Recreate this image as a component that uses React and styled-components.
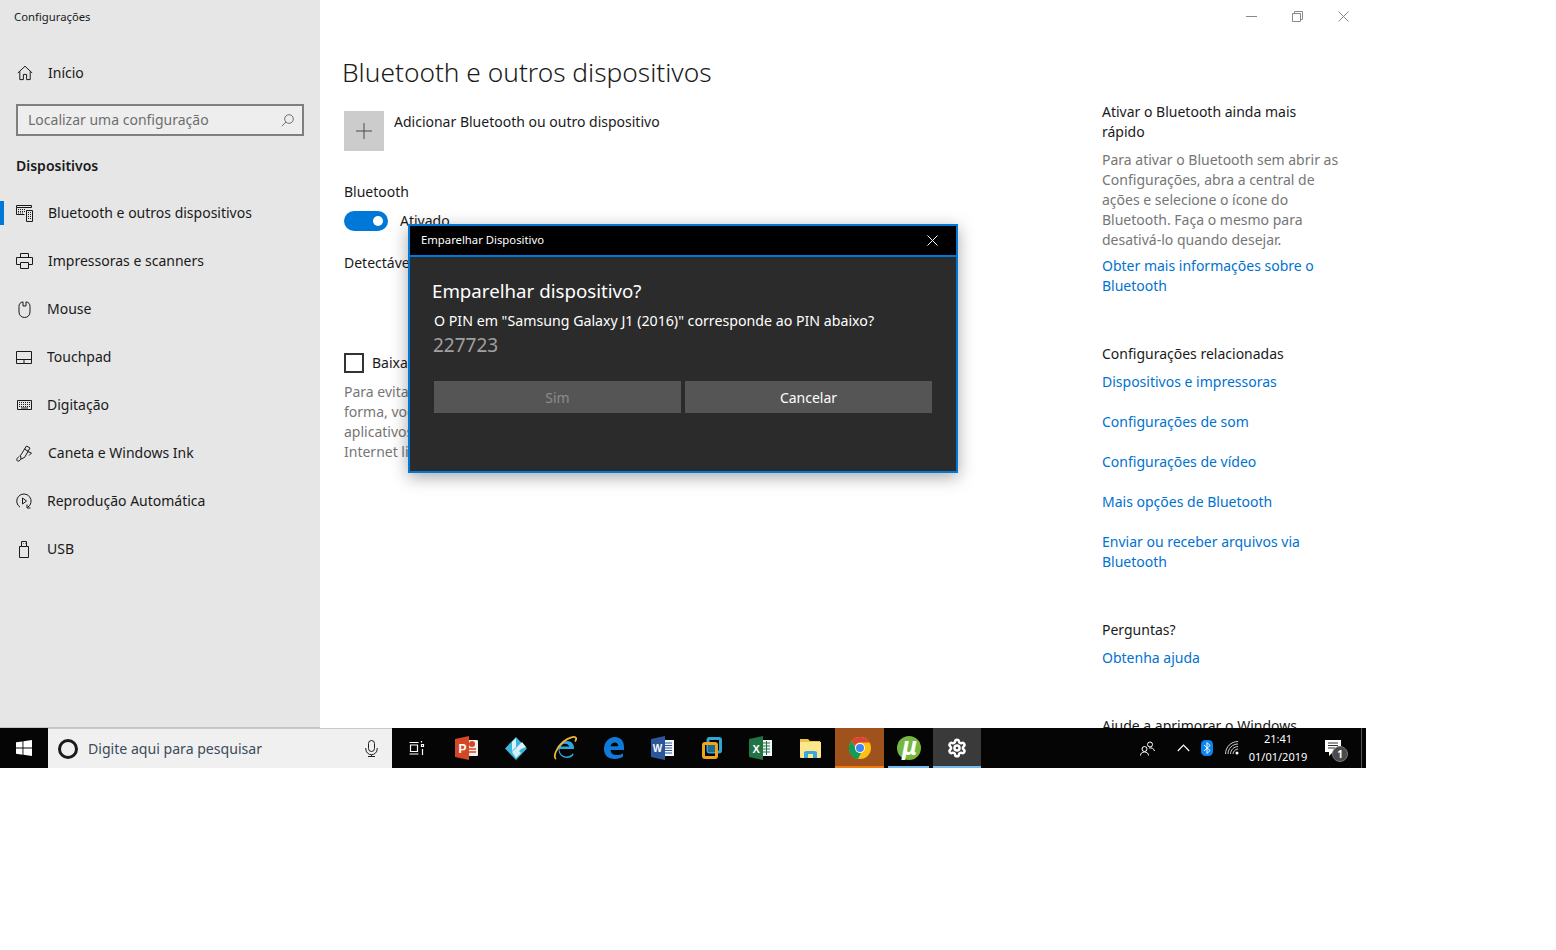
import React from "react";
import styled, { createGlobalStyle } from "styled-components";
import { Settings } from "lucide-react";

const GlobalStyle = createGlobalStyle`
  html, body {
    margin: 0;
    background: #fff;
  }
  body {
    font-family: "Noto Sans", "Open Sans", sans-serif;
    font-size: 14px;
    line-height: 20px;
    color: #1a1a1a;
  }
  * { box-sizing: border-box; }
`;

const Line = (props) => (
  <svg fill="none" stroke="currentColor" strokeWidth="1" {...props} />
);

const HomeIcon = () => (
  <Line width="16" height="16" viewBox="0 0 16 16">
    <path d="M.8 8 8 1.2 15.2 8M2.8 6.4v8.2h3.6V9.4h3.2v5.2h3.6V6.4" />
  </Line>
);
const DeviceIcon = () => (
  <Line width="17" height="17" viewBox="0 0 17 17">
    <path d="M.5.5h15v2H.5zM.5 2.500v7h8M10.500 5.500h6v11h-6z" />
    <path d="M2 4.500h8M2 6.500h7M2 8h6M12 7.500h3M12 9.500h3M12 11.500h3M12 13.500h3" strokeDasharray="1 1" />
  </Line>
);
const PrinterIcon = () => (
  <Line width="17" height="16" viewBox="0 0 17 16">
    <path d="M4.500 4.500V.5h8v4M4.500 11.500H.5v-7h16v7h-4M4.500 9.500h8v6h-8z" />
  </Line>
);
const MouseIcon = () => (
  <Line width="13" height="17" viewBox="0 0 13 17">
    <path d="M5 .9C2.200 1.200 1 3 1 5.500v5.500c0 3.200 2.300 5.500 5.500 5.500S12 14.200 12 11V5.500C12 3 10.800 1.200 8 .9V5H5z" />
  </Line>
);
const TouchpadIcon = () => (
  <Line width="16" height="13" viewBox="0 0 16 13">
    <path d="M.5.5h15v12H.5zM.5 8.500h15M8 8.500v4" />
  </Line>
);
const KeyboardIcon = () => (
  <Line width="15" height="10" viewBox="0 0 15 10">
    <path d="M.5.5h14v9H.5z" />
    <path d="M2 2.500h11M2 4.500h11M2 6.500h11" strokeDasharray="1 1" />
    <path d="M4 8h7" />
  </Line>
);
const PenIcon = () => (
  <Line width="17" height="17" viewBox="0 0 17 17">
    <path d="M4.500 10.500 10.500 1l3.500 2-5.500 9.500-3.500 1.500zM11.500 6.500l4 1.500-2.500 2.500M8.500 4l3.500 2.200" />
    <path d="M5 14c-1.500 2.500-4 2.700-4.200.8-.1-1.500 1.500-2.600 2.700-3.800" />
  </Line>
);
const AutoplayIcon = () => (
  <Line width="16" height="16" viewBox="0 0 16 16">
    <path d="M4 14.200A7.200 7.200 0 1 1 11.500 14.400" />
    <path d="M11 11.500v3.500h3.500M6.500 5l4 3-4 3z" />
  </Line>
);
const UsbIcon = () => (
  <Line width="10" height="17" viewBox="0 0 10 17">
    <path d="M2.500.5h5v5h-5zM.5 5.500h9v11h-9zM4 2.500h.5M6 2.500h.5" />
  </Line>
);

const MagnifierIcon = () => (
  <Line width="13" height="13" viewBox="0 0 13 13">
    <circle cx="8" cy="5" r="4.300" />
    <path d="M5 8 .8 12.200" />
  </Line>
);

const CloseIcon = ({ size = 11 }) => (
  <Line width={size} height={size} viewBox="0 0 11 11">
    <path d="M.5.5l10 10M10.500.5l-10 10" />
  </Line>
);

const WindowsLogo = () => (
  <svg width="16" height="16" viewBox="0 0 16 16" fill="#fff">
    <path d="M0 2.300 6.500 1.400v6.200H0zM7.400 1.300 16 0v7.600H7.400zM0 8.500h6.500v6.200L0 13.800zM7.400 8.500H16V16l-8.600-1.200z" />
  </svg>
);

const MicIcon = () => (
  <svg width="13" height="17" viewBox="0 0 13 17" fill="none" stroke="#1f1f1f">
    <rect x="3.500" y=".5" width="6" height="11" rx="3" />
    <path d="M.8 8v1a5.700 5.700 0 0 0 11.400 0V8M6.500 15v1.500M3 16.500h7" />
  </svg>
);

const TaskViewIcon = () => (
  <svg width="16" height="16" viewBox="0 0 16 16" fill="none" stroke="#fff" strokeWidth="1.200">
    <path d="M.5 2.500h9M.5 14h9M1.500 5h7v6.500h-7z" />
    <path d="M12.500 1v1.500M14.500 4.500h-2V6.500h2zM13.500 9v6" />
  </svg>
);

const PowerPointIcon = () => (
  <svg width="23" height="24" viewBox="0 0 23 24">
    <path d="M8 4h14a1 1 0 0 1 1 1v14a1 1 0 0 1-1 1H8z" fill="#f4efe9" />
    <path d="M13 8h7M13 13h8M13 16h8" stroke="#d24726" strokeWidth="1.500" />
    <circle cx="17" cy="8" r="3" fill="#d24726" />
    <path d="M0 3 14 0v24L0 21z" fill="#d24726" />
    <text x="3.500" y="16.500" fontFamily="Liberation Sans" fontWeight="700" fontSize="12" fill="#fff">P</text>
  </svg>
);

const KodiIcon = () => (
  <svg width="22" height="23" viewBox="0 0 22 23">
    <path d="M11 0 22 11.500 11 23 0 11.500z" fill="#3db6dc" />
    <path d="M7 5l4-4v9l-4 4zM11 11l6-6 4 5-5 2-3 3z" fill="#dff3fa" />
    <path d="M7 15l4-4 5 5-5 5z" fill="#d3eef7" />
  </svg>
);

const IeIcon = () => (
  <svg width="24" height="24" viewBox="0 0 24 24" fill="none">
    <path d="M20 17c-2 3.500-9 5-12 1-1-1.500-1.500-3-1.500-5H21c.5-5-2.500-8-7-8-5 0-8 3.500-8.500 8 0 6 4 9 8.500 9 3 0 5-1 6.500-3zM8 10.500c1-3 6-4 8.500 0z" fill="#2ea7e0" fillRule="evenodd" />
    <path d="M3 23C0 21 3 12 10 6c6-5 12-6 13-4 .5 1-.3 2.500-1 3.500" stroke="#f2b632" strokeWidth="1.800" />
  </svg>
);

const EdgeIcon = () => (
  <svg width="20" height="22" viewBox="0 0 20 22">
    <path d="M19 19.500c-2 1.500-4.500 2.500-8 2.500-6 0-11-3-11-10C0 5 5 0 11 0c5 0 9 3.500 9 10v3H6.500c.3 3 2.500 5 6 5 2.500 0 4.500-.500 6.500-1.500zM6.500 9.200h7.800c0-2.200-1.300-3.700-3.600-3.700-2 0-3.700 1.500-4.200 3.700z" fill="#0f7bd8" fillRule="evenodd" />
  </svg>
);

const WordIcon = () => (
  <svg width="23" height="24" viewBox="0 0 23 24">
    <path d="M8 4h15v16H8z" fill="#f2f5fb" />
    <path d="M14 7h7M14 9.500h7M14 12h7M14 14.500h7M14 17h7" stroke="#2b579a" />
    <path d="M0 3 14 0v24L0 21z" fill="#2b579a" />
    <text x="1.800" y="16" fontFamily="Liberation Sans" fontWeight="700" fontSize="10" fill="#fff">W</text>
  </svg>
);

const VmwareIcon = () => (
  <svg width="20" height="22" viewBox="0 0 20 22" fill="none">
    <rect x="6" y="1.500" width="12.500" height="13.500" rx="1.500" stroke="#2fa6d6" strokeWidth="3" />
    <rect x="1.500" y="6.500" width="13" height="14" rx="1.500" stroke="#f2a31b" strokeWidth="3" />
    <rect x="6" y="8" width="7" height="7" fill="#1c6c8e" />
  </svg>
);

const ExcelIcon = () => (
  <svg width="23" height="24" viewBox="0 0 23 24">
    <path d="M8 4h15v16H8z" fill="#f2f8f4" />
    <path d="M14 7h7M14 10h7M14 13h7M14 16h7M17.500 5v14" stroke="#217346" />
    <path d="M0 3 14 0v24L0 21z" fill="#217346" />
    <text x="3.500" y="16.500" fontFamily="Liberation Sans" fontWeight="700" fontSize="11" fill="#fff">X</text>
  </svg>
);

const FolderIcon = () => (
  <svg width="21" height="20" viewBox="0 0 21 20">
    <path d="M0 1h8l2 2h10v3H0z" fill="#e8c34a" />
    <path d="M0 4h21v15a1 1 0 0 1-1 1H1a1 1 0 0 1-1-1z" fill="#fde78c" />
    <path d="M4 20v-6l2-1h9l2 1v6h-4v-4H8v4z" fill="#39a7df" />
  </svg>
);

const ChromeIcon = () => (
  <svg width="22" height="22" viewBox="0 0 22 22">
    <circle cx="11" cy="11" r="11" fill="#fbc116" />
    <path d="M11 0a11 11 0 0 1 9.500 5.500H11a5.500 5.500 0 0 0-5.200 3.700L2.500 4A11 11 0 0 1 11 0z" fill="#db4437" />
    <path d="M2.500 4l5 8.500a4.500 4.500 0 0 0 4.500 3.500L9 22A11 11 0 0 1 2.500 4z" fill="#0f9d58" />
    <circle cx="11" cy="11" r="5" fill="#fff" />
    <circle cx="11" cy="11" r="4" fill="#4285f4" />
  </svg>
);

const TorrentIcon = () => (
  <svg width="24" height="24" viewBox="0 0 24 24">
    <circle cx="12" cy="12" r="12" fill="#76b83f" />
    <text x="12.500" y="19" textAnchor="middle" fontFamily="Liberation Sans" fontStyle="italic" fontWeight="700" fontSize="26" fill="#fff">µ</text>
  </svg>
);

const PeopleIcon = () => (
  <svg width="15" height="15" viewBox="0 0 15 15" fill="none" stroke="#fff">
    <circle cx="4.500" cy="8" r="2.500" />
    <circle cx="10" cy="3.500" r="2.500" />
    <path d="M.5 14.500c0-2 1.500-3.500 4-3.500s4 1.500 4 3.500M9 7c2.500-.5 5 .5 5.500 3" />
  </svg>
);

const ChevronIcon = () => (
  <svg width="13" height="8" viewBox="0 0 13 8" fill="none" stroke="#fff" strokeWidth="1.200">
    <path d="M.8 7 6.500 1.200 12.200 7" />
  </svg>
);

const BluetoothBadge = () => (
  <svg width="12" height="16" viewBox="0 0 12 16">
    <rect width="12" height="16" rx="4.500" fill="#0a84ee" />
    <path d="M3 5l6 5.500L6 13.500v-11L9 5.500 3 11" fill="none" stroke="#fff" />
  </svg>
);

const WifiIcon = () => (
  <svg width="14" height="14" viewBox="0 0 14 14" fill="none" stroke="#cfcfcf">
    <path d="M.5 13C.5 6 6 .5 13 .5M3 13c0-5.500 4.500-10 10-10M5.500 13c0-4 3.500-7.500 7.500-7.500M8 13c0-2.500 2.500-5 5-5" />
    <circle cx="12" cy="12" r="1.500" fill="#fff" stroke="none" />
  </svg>
);

const NotificationIcon = () => (
  <svg width="16" height="16" viewBox="0 0 16 16">
    <path d="M0 0h16v12H8l-4 4v-4H0z" fill="#fff" />
    <path d="M3 3h10M3 5.500h10M3 8h7" stroke="#333" />
  </svg>
);

const navItems = [
  { label: "Bluetooth e outros dispositivos", Icon: DeviceIcon, active: true },
  { label: "Impressoras e scanners", Icon: PrinterIcon },
  { label: "Mouse", Icon: MouseIcon },
  { label: "Touchpad", Icon: TouchpadIcon },
  { label: "Digitação", Icon: KeyboardIcon },
  { label: "Caneta e Windows Ink", Icon: PenIcon },
  { label: "Reprodução Automática", Icon: AutoplayIcon },
  { label: "USB", Icon: UsbIcon },
];

const relatedLinks = [
  "Dispositivos e impressoras",
  "Configurações de som",
  "Configurações de vídeo",
  "Mais opções de Bluetooth",
  "Enviar ou receber arquivos via Bluetooth",
];

const pinnedApps = [
  { name: "powerpoint", Icon: PowerPointIcon },
  { name: "kodi", Icon: KodiIcon },
  { name: "ie", Icon: IeIcon },
  { name: "edge", Icon: EdgeIcon },
  { name: "word", Icon: WordIcon },
  { name: "vmware", Icon: VmwareIcon },
  { name: "excel", Icon: ExcelIcon },
  { name: "explorer", Icon: FolderIcon, width: 50 },
];

const App = () => {
  return (
    <Screen>
      <GlobalStyle />
      <Window>
        <Sidebar>
          <AppTitle>Configurações</AppTitle>
          <HomeLink>
            <NavIcon><HomeIcon /></NavIcon>
            Início
          </HomeLink>
          <SearchBox>
            <span>Localizar uma configuração</span>
            <MagnifierIcon />
          </SearchBox>
          <SectionTitle>Dispositivos</SectionTitle>
          <NavList>
            {navItems.map(({ label, Icon, active }) => (
              <NavItem key={label} $active={active}>
                <NavIcon><Icon /></NavIcon>
                {label}
              </NavItem>
            ))}
          </NavList>
        </Sidebar>

        <Main>
          <WindowControls>
            <ControlButton>
              <svg width="11" height="1"><path d="M0 .5h11" stroke="currentColor" /></svg>
            </ControlButton>
            <ControlButton>
              <Line width="11" height="11" viewBox="0 0 11 11">
                <path d="M.5 2.500h8v8h-8zM2.500 2.500v-2h8v8h-2" />
              </Line>
            </ControlButton>
            <ControlButton><CloseIcon /></ControlButton>
          </WindowControls>

          <Body>
            <Content>
              <PageTitle>Bluetooth e outros dispositivos</PageTitle>
              <AddRow>
                <AddTile>
                  <svg width="16" height="16"><path d="M8 0v16M0 8h16" stroke="#4a4a4a" /></svg>
                </AddTile>
                <AddLabel>Adicionar Bluetooth ou outro dispositivo</AddLabel>
              </AddRow>
              <FieldLabel>Bluetooth</FieldLabel>
              <ToggleRow>
                <Toggle />
                <span>Ativado</span>
              </ToggleRow>
              <Discoverable>Detectável</Discoverable>
              <CheckRow>
                <CheckBox />
                <span>Baixar</span>
              </CheckRow>
              <Muted>
                Para evitar
                <br />
                forma, você
                <br />
                aplicativos
                <br />
                Internet limitada
              </Muted>
            </Content>

            <Aside>
              <AsideBlock>
                <AsideTitle>Ativar o Bluetooth ainda mais rápido</AsideTitle>
                <AsideText>
                  Para ativar o Bluetooth sem abrir as Configurações, abra a
                  central de ações e selecione o ícone do Bluetooth. Faça o
                  mesmo para desativá-lo quando desejar.
                </AsideText>
                <AsideLink $gap={6}>Obter mais informações sobre o Bluetooth</AsideLink>
              </AsideBlock>
              <AsideBlock>
                <AsideTitle>Configurações relacionadas</AsideTitle>
                {relatedLinks.map((link, i) => (
                  <AsideLink key={link} $gap={i === 0 ? 8 : 20}>{link}</AsideLink>
                ))}
              </AsideBlock>
              <AsideBlock>
                <AsideTitle>Perguntas?</AsideTitle>
                <AsideLink $gap={8}>Obtenha ajuda</AsideLink>
              </AsideBlock>
              <AsideBlock>
                <AsideTitle>Ajude a aprimorar o Windows</AsideTitle>
              </AsideBlock>
            </Aside>
          </Body>
        </Main>
      </Window>

      <Taskbar>
        <StartButton><WindowsLogo /></StartButton>
        <TaskSearch>
          <CortanaRing />
          <SearchHint>Digite aqui para pesquisar</SearchHint>
          <MicIcon />
        </TaskSearch>
        <TaskTile $width={50}><TaskViewIcon /></TaskTile>
        {pinnedApps.map(({ name, Icon, width }) => (
          <TaskTile key={name} $width={width}><Icon /></TaskTile>
        ))}
        <TaskTile $bg="#a0521c" $underline="#f07a0c"><ChromeIcon /></TaskTile>
        <TaskTile $underline="#76b9ed" $inset={4}><TorrentIcon /></TaskTile>
        <TaskTile $width={48} $bg="#3a3a3a" $underline="#76b9ed">
          <Settings size={20} color="#fff" strokeWidth={3} />
        </TaskTile>

        <Tray>
          <TrayItem $width={36}><PeopleIcon /></TrayItem>
          <TrayItem $width={36}><ChevronIcon /></TrayItem>
          <TrayItem $width={12}><BluetoothBadge /></TrayItem>
          <TrayItem $width={38}><WifiIcon /></TrayItem>
          <Clock>
            <span>21:41</span>
            <span>01/01/2019</span>
          </Clock>
          <TrayItem $width={56}>
            <NotificationWrap>
              <NotificationIcon />
              <NotificationCount>1</NotificationCount>
            </NotificationWrap>
          </TrayItem>
          <TrayEdge />
        </Tray>
      </Taskbar>

      <Dialog>
        <DialogBar>
          <span>Emparelhar Dispositivo</span>
          <DialogClose><CloseIcon /></DialogClose>
        </DialogBar>
        <DialogBody>
          <DialogHeading>Emparelhar dispositivo?</DialogHeading>
          <DialogText>O PIN em "Samsung Galaxy J1 (2016)" corresponde ao PIN abaixo?</DialogText>
          <DialogPin>227723</DialogPin>
          <DialogActions>
            <DialogButton $disabled>Sim</DialogButton>
            <DialogButton>Cancelar</DialogButton>
          </DialogActions>
        </DialogBody>
      </Dialog>
    </Screen>
  );
};

const Screen = styled.div`
  position: relative;
  width: 1366px;
  height: 768px;
`;

const Window = styled.div`
  display: flex;
  height: 728px;
  overflow: hidden;
`;

const Sidebar = styled.aside`
  flex: 0 0 320px;
  background: #e6e6e6;
  border-bottom: 1px solid #c4c4c4;
`;

const AppTitle = styled.div`
  height: 32px;
  padding: 7px 0 0 14px;
  font-size: 11.3px;
  line-height: 20px;
`;

const NavIcon = styled.span`
  flex: 0 0 16px;
  display: flex;
  align-items: center;
  justify-content: center;
  margin-right: 15px;
`;

const HomeLink = styled.div`
  display: flex;
  align-items: center;
  height: 20px;
  margin-top: 31px;
  padding-left: 17px;
`;

const SearchBox = styled.div`
  display: flex;
  align-items: center;
  justify-content: space-between;
  width: 288px;
  height: 32px;
  margin: 21px 0 0 16px;
  padding: 0 8px 0 10px;
  background: #eeeeee;
  border: 2px solid #7f7f7f;
  color: #6e6e6e;
`;

const SectionTitle = styled.h2`
  margin: 20px 0 0 16px;
  font-size: 14px;
  line-height: 20px;
  font-weight: 600;
`;

const NavList = styled.nav`
  margin-top: 13px;
`;

const NavItem = styled.div`
  display: flex;
  align-items: center;
  height: 48px;
  padding-left: 16px;
  position: relative;

  &::before {
    content: "";
    display: ${(p) => (p.$active ? "block" : "none")};
    position: absolute;
    left: 0;
    top: 12px;
    width: 4px;
    height: 24px;
    background: #0078d7;
  }
`;

const Main = styled.main`
  flex: 1;
  display: flex;
  flex-direction: column;
  min-width: 0;
  background: #fff;
`;

const WindowControls = styled.div`
  display: flex;
  justify-content: flex-end;
  flex: 0 0 32px;
`;

const ControlButton = styled.div`
  width: 46px;
  display: flex;
  align-items: center;
  justify-content: center;
  color: #8a8a8a;
`;

const Body = styled.div`
  display: flex;
  flex: 0 0 auto;
  padding-left: 22px;
`;

const Content = styled.div`
  flex: 0 0 760px;
`;

const PageTitle = styled.h1`
  margin: 20px 0 0;
  font-size: 26.3px;
  line-height: 40px;
  font-weight: 300;
`;

const AddRow = styled.div`
  display: flex;
  margin: 19px 0 0 2px;
`;

const AddTile = styled.div`
  width: 40px;
  height: 40px;
  display: flex;
  align-items: center;
  justify-content: center;
  background: #cccccc;
`;

const AddLabel = styled.div`
  margin: 1px 0 0 10px;
`;

const FieldLabel = styled.div`
  margin: 31px 0 0 2px;
`;

const ToggleRow = styled.div`
  display: flex;
  align-items: center;
  gap: 12px;
  margin: 9px 0 0 2px;
`;

const Toggle = styled.div`
  position: relative;
  width: 44px;
  height: 20px;
  border-radius: 10px;
  background: #0078d7;

  &::after {
    content: "";
    position: absolute;
    right: 5px;
    top: 5px;
    width: 10px;
    height: 10px;
    border-radius: 50%;
    background: #fff;
  }
`;

const Discoverable = styled.div`
  margin: 22px 0 0 2px;
`;

const CheckRow = styled.div`
  display: flex;
  align-items: center;
  gap: 8px;
  margin: 80px 0 0 2px;
`;

const CheckBox = styled.div`
  width: 20px;
  height: 20px;
  border: 2px solid #333;
`;

const Muted = styled.p`
  margin: 9px 0 0 2px;
  color: #767676;
  white-space: nowrap;
`;

const Aside = styled.div`
  flex: 0 0 240px;
  padding-top: 70px;
`;

const AsideBlock = styled.section`
  & + & {
    margin-top: 48px;
  }
`;

const AsideTitle = styled.div``;

const AsideText = styled.p`
  margin: 8px 0 0;
  color: #767676;
`;

const AsideLink = styled.a`
  display: block;
  margin-top: ${(p) => p.$gap}px;
  color: #0072cf;
`;

const Taskbar = styled.div`
  display: flex;
  height: 40px;
  background: #050505;
`;

const StartButton = styled.div`
  flex: 0 0 48px;
  display: flex;
  align-items: center;
  justify-content: center;
`;

const TaskSearch = styled.div`
  flex: 0 0 344px;
  display: flex;
  align-items: center;
  padding: 0 14px 0 10px;
  background: #f0f0f0;
  border-top: 1px solid #c8c8c8;
`;

const CortanaRing = styled.div`
  width: 20px;
  height: 20px;
  border: 3px solid #1a1a1a;
  border-radius: 50%;
`;

const SearchHint = styled.span`
  flex: 1;
  margin-left: 10px;
  font-size: 14.1px;
  color: #3b4a5a;
`;

const TaskTile = styled.div`
  position: relative;
  flex: 0 0 ${(p) => p.$width || 49}px;
  display: flex;
  align-items: center;
  justify-content: center;
  background: ${(p) => p.$bg || "transparent"};

  &::after {
    content: "";
    position: absolute;
    left: ${(p) => p.$inset || 0}px;
    right: ${(p) => p.$inset || 0}px;
    bottom: 0;
    height: 2px;
    background: ${(p) => p.$underline || "transparent"};
  }
`;

const Tray = styled.div`
  display: flex;
  margin-left: auto;
  color: #fff;
`;

const TrayItem = styled.div`
  flex: 0 0 ${(p) => p.$width}px;
  display: flex;
  align-items: center;
  justify-content: center;
`;

const Clock = styled.div`
  flex: 0 0 54px;
  min-width: 0;
  display: flex;
  flex-direction: column;
  align-items: center;
  justify-content: center;
  font-size: 11px;
  line-height: 18px;
  white-space: nowrap;
`;

const NotificationWrap = styled.div`
  position: relative;
  display: flex;
`;

const NotificationCount = styled.span`
  position: absolute;
  left: 7px;
  top: 6px;
  width: 16px;
  height: 16px;
  border-radius: 50%;
  background: #4a4a4a;
  border: 1px solid #777;
  font-size: 10px;
  line-height: 14px;
  font-weight: 700;
  text-align: center;
  color: #fff;
`;

const TrayEdge = styled.div`
  width: 5px;
  border-left: 1px solid #555;
`;

const Dialog = styled.div`
  position: absolute;
  left: 408px;
  top: 224px;
  width: 550px;
  height: 249px;
  display: flex;
  flex-direction: column;
  border: 2px solid #0078d7;
  background: #2b2b2b;
  box-shadow: 0 4px 16px rgba(0, 0, 0, 0.35);
  color: #fff;
`;

const DialogBar = styled.div`
  display: flex;
  align-items: center;
  justify-content: space-between;
  flex: 0 0 31px;
  padding: 0 18px 1px 11px;
  background: #000;
  border-bottom: 2px solid #0078d7;
  font-size: 11.3px;
`;

const DialogClose = styled.span`
  display: flex;
`;

const DialogBody = styled.div`
  padding: 20px 24px 0 22px;
`;

const DialogHeading = styled.div`
  font-size: 18.7px;
  line-height: 28px;
`;

const DialogText = styled.div`
  margin: 6px 0 0 2px;
  font-size: 14.2px;
`;

const DialogPin = styled.div`
  margin: 0 0 0 1px;
  font-size: 19px;
  line-height: 28px;
  color: #a0a0a0;
`;

const DialogActions = styled.div`
  display: grid;
  grid-template-columns: 247px 247px;
  gap: 4px;
  margin: 22px 0 0 2px;
`;

const DialogButton = styled.div`
  height: 32px;
  line-height: 33px;
  text-align: center;
  background: #555555;
  color: ${(p) => (p.$disabled ? "#8c8c8c" : "#fff")};
`;

export default App;
